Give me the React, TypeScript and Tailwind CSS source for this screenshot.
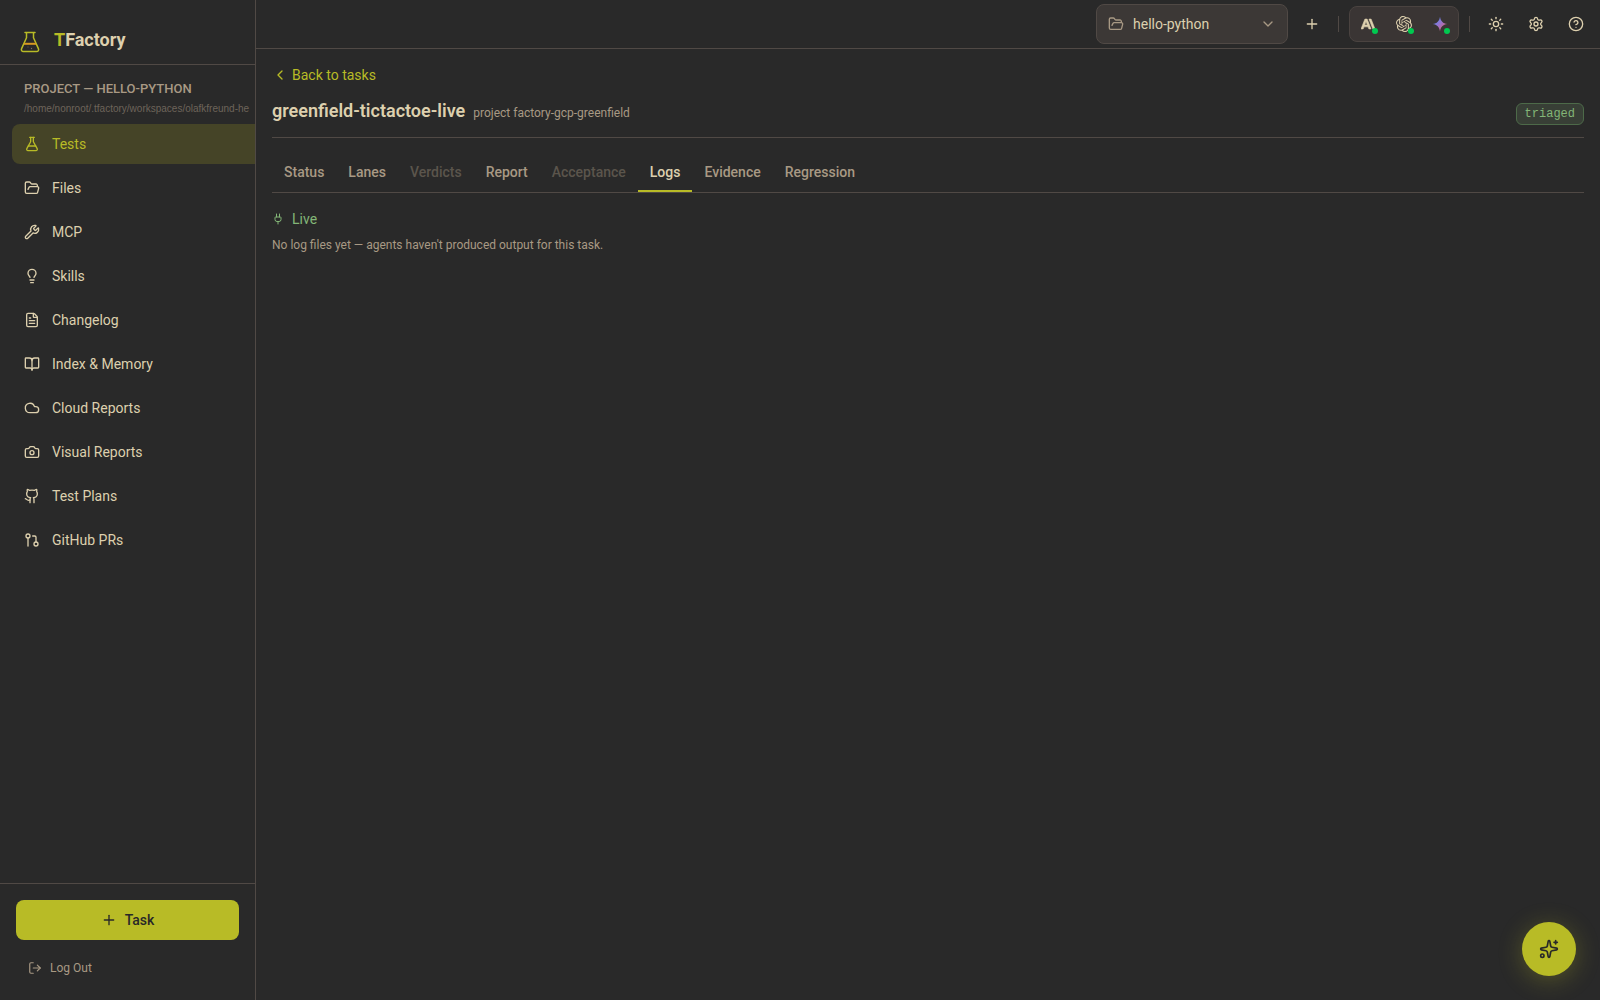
import React, { useState } from "react";
import {
  BookOpen,
  Camera,
  ChevronDown,
  ChevronLeft,
  CircleHelp,
  Cloud,
  FileText,
  FlaskConical,
  FolderOpen,
  Github,
  GitPullRequest,
  Lightbulb,
  LogOut,
  Plug,
  Plus,
  Settings,
  Sparkles,
  Sun,
  Wrench,
} from "lucide-react";
import { SiAnthropic, SiOpenai } from "react-icons/si";

const NAV = [
  { label: "Tests", icon: FlaskConical },
  { label: "Files", icon: FolderOpen },
  { label: "MCP", icon: Wrench },
  { label: "Skills", icon: Lightbulb },
  { label: "Changelog", icon: FileText },
  { label: "Index & Memory", icon: BookOpen },
  { label: "Cloud Reports", icon: Cloud },
  { label: "Visual Reports", icon: Camera },
  { label: "Test Plans", icon: Github },
  { label: "GitHub PRs", icon: GitPullRequest },
];

const TABS = [
  { label: "Status" },
  { label: "Lanes" },
  { label: "Verdicts", disabled: true },
  { label: "Report" },
  { label: "Acceptance", disabled: true },
  { label: "Logs" },
  { label: "Evidence" },
  { label: "Regression" },
];

const Flask = () => (
  <svg width="20" height="22" viewBox="0 0 20 22" fill="none">
    <path
      d="M5 1.5h10M6.5 1.5v5.2L1.6 17.6c-.7 1.6.2 2.9 1.8 2.9h13.2c1.6 0 2.5-1.3 1.8-2.900L13.5 6.7V1.5"
      stroke="#b8bb26"
      strokeWidth="1.5"
      strokeLinecap="round"
      strokeLinejoin="round"
    />
    <path d="M4 12.8h12" stroke="#d79921" strokeWidth="2" />
    <circle cx="8" cy="16" r="0.7" fill="#504945" />
    <circle cx="11.5" cy="17.5" r="0.7" fill="#7c6f64" />
  </svg>
);

const Gemini = () => (
  <svg width="16" height="16" viewBox="0 0 24 24">
    <defs>
      <linearGradient id="gemini" x1="0" y1="0" x2="1" y2="1">
        <stop offset="0.2" stopColor="#5f86ee" />
        <stop offset="0.5" stopColor="#9b72cb" />
        <stop offset="0.85" stopColor="#d96570" />
      </linearGradient>
    </defs>
    <path
      d="M12 1c1 6.6 4.4 10 11 11-6.6 1-10 4.400-11 11-1-6.600-4.400-10-11-11 6.600-1 10-4.400 11-11z"
      fill="url(#gemini)"
    />
  </svg>
);

const PROVIDERS = [
  { label: "Anthropic", icon: <SiAnthropic size={14} stroke="currentColor" strokeWidth={1} /> },
  { label: "OpenAI", icon: <SiOpenai size={16} /> },
  { label: "Gemini", icon: <Gemini /> },
];

const IconButton = ({ label, children }: { label: string; children: React.ReactNode }) => (
  <button type="button" aria-label={label} className="flex h-8 w-8 items-center justify-center rounded-md hover:bg-[#3c3836]">
    {children}
  </button>
);

const Sidebar = () => {
  const [current, setCurrent] = useState("Tests");

  return (
    <aside className="flex w-64 shrink-0 flex-col overflow-hidden border-r border-[#504945]">
      <div className="flex items-center gap-3.5 border-b border-[#504945] px-5 pt-4 pb-0">
        <div className="flex h-12 items-center pt-1">
          <Flask />
        </div>
        <span className="text-lg font-bold">
          <span className="text-[#b8bb26]">T</span>Factory
        </span>
      </div>
      <div className="pt-4 pl-6 whitespace-nowrap">
        <h2 className="text-[13px] leading-4 font-medium text-[#a89984]">PROJECT — HELLO-PYTHON</h2>
        <p className="mt-1 font-['Liberation_Sans',sans-serif] text-[10px] leading-4 text-[#6d645a]">
          /home/nonroot/.tfactory/workspaces/olafkfreund-he
        </p>
      </div>
      <nav className="mt-[7px] flex flex-1 flex-col gap-1 pl-3">
        {NAV.map(({ label, icon: Icon }) => (
          <button
            key={label}
            type="button"
            onClick={() => setCurrent(label)}
            className={`flex h-10 items-center gap-3 rounded-l-lg px-3 text-sm ${
              current === label ? "bg-[#454427] text-[#b8bb26]" : ""
            }`}
          >
            <Icon size={16} />
            {label}
          </button>
        ))}
      </nav>
      <div className="flex flex-col gap-2 border-t border-[#504945] px-4 pt-4 pb-3">
        <button
          type="button"
          className="flex h-10 items-center justify-center gap-2 rounded-lg bg-[#b8bb26] text-sm font-medium text-[#282828]"
        >
          <Plus size={16} />
          Task
        </button>
        <button type="button" className="flex h-10 items-center gap-2 px-3 text-xs text-[#a89984]">
          <LogOut size={14} />
          Log Out
        </button>
      </div>
    </aside>
  );
};

const TopBar = () => (
  <header className="flex h-[49px] shrink-0 items-center justify-end gap-2 border-b border-[#504945] px-2">
    <div className="relative">
      <FolderOpen size={16} className="pointer-events-none absolute top-3 left-3 text-[#a89984]" />
      <select
        aria-label="Project"
        className="h-10 w-48 appearance-none rounded-lg border border-[#504945] bg-[#3c3836] pr-8 pl-9 text-sm"
      >
        <option>hello-python</option>
      </select>
      <ChevronDown size={16} className="pointer-events-none absolute top-3 right-3 text-[#a89984]" />
    </div>
    <IconButton label="Add project">
      <Plus size={16} />
    </IconButton>
    <div className="mx-0.5 h-4 w-px bg-[#504945]" />
    <div className="flex h-9 items-center gap-1 rounded-lg border border-[#4a4340] bg-[#3a3534] px-0.5">
      {PROVIDERS.map((p) => (
        <button key={p.label} type="button" aria-label={p.label} className="relative flex h-8 w-8 items-center justify-center">
          {p.icon}
          <span className="absolute right-1.5 bottom-1.5 h-1.5 w-1.5 rounded-full bg-[#00c950]" />
        </button>
      ))}
    </div>
    <div className="mx-0.5 h-4 w-px bg-[#504945]" />
    <div className="flex gap-2">
      <IconButton label="Theme">
        <Sun size={16} />
      </IconButton>
      <IconButton label="Settings">
        <Settings size={16} />
      </IconButton>
      <IconButton label="Help">
        <CircleHelp size={16} />
      </IconButton>
    </div>
  </header>
);

const App = () => {
  const [tab, setTab] = useState("Logs");

  return (
    <div className="flex min-h-screen bg-[#292929] font-['Roboto',sans-serif] text-[#ddd0ae]">
      <Sidebar />
      <div className="flex min-w-0 flex-1 flex-col">
        <TopBar />
        <main className="flex-1 px-4 pt-4">
          <button type="button" className="flex items-center gap-1 text-sm text-[#b8bb26]">
            <ChevronLeft size={16} />
            Back to tasks
          </button>
          <div className="flex items-end justify-between border-b border-[#504945] pt-3 pb-3">
            <div className="flex items-baseline gap-2">
              <h1 className="text-lg font-semibold">greenfield-tictactoe-live</h1>
              <span className="text-xs text-[#a89984]">project factory-gcp-greenfield</span>
            </div>
            <span className="rounded-md border border-[#4d6a49] bg-[#383f36] px-2 py-0.5 font-['Liberation_Mono',monospace] text-xs text-[#83b677]">
              triaged
            </span>
          </div>
          <div role="tablist" className="mt-4 flex border-b border-[#504945]">
            {TABS.map(({ label, disabled }) => (
              <button
                key={label}
                type="button"
                role="tab"
                aria-selected={tab === label}
                disabled={disabled}
                onClick={() => setTab(label)}
                className={`border-b-2 px-3 pt-2 pb-2 text-sm font-medium ${
                  tab === label ? "border-[#b8bb26]" : "border-transparent text-[#a89984]"
                } disabled:text-[#5b554c]`}
              >
                {label}
              </button>
            ))}
          </div>
          <div className="mt-4 flex items-center gap-2 text-sm text-[#83b677]">
            <Plug size={12} />
            Live
          </div>
          <p className="mt-2 text-xs text-[#a89984]">No log files yet — agents haven't produced output for this task.</p>
        </main>
      </div>
      <button
        type="button"
        aria-label="Assistant"
        className="fixed right-6 bottom-6 flex h-[54px] w-[54px] items-center justify-center rounded-full bg-[#b8bb26] text-[#282828] shadow-[0_4px_24px_rgba(184,187,38,0.3)]"
      >
        <Sparkles size={20} />
      </button>
    </div>
  );
};

export default App;
